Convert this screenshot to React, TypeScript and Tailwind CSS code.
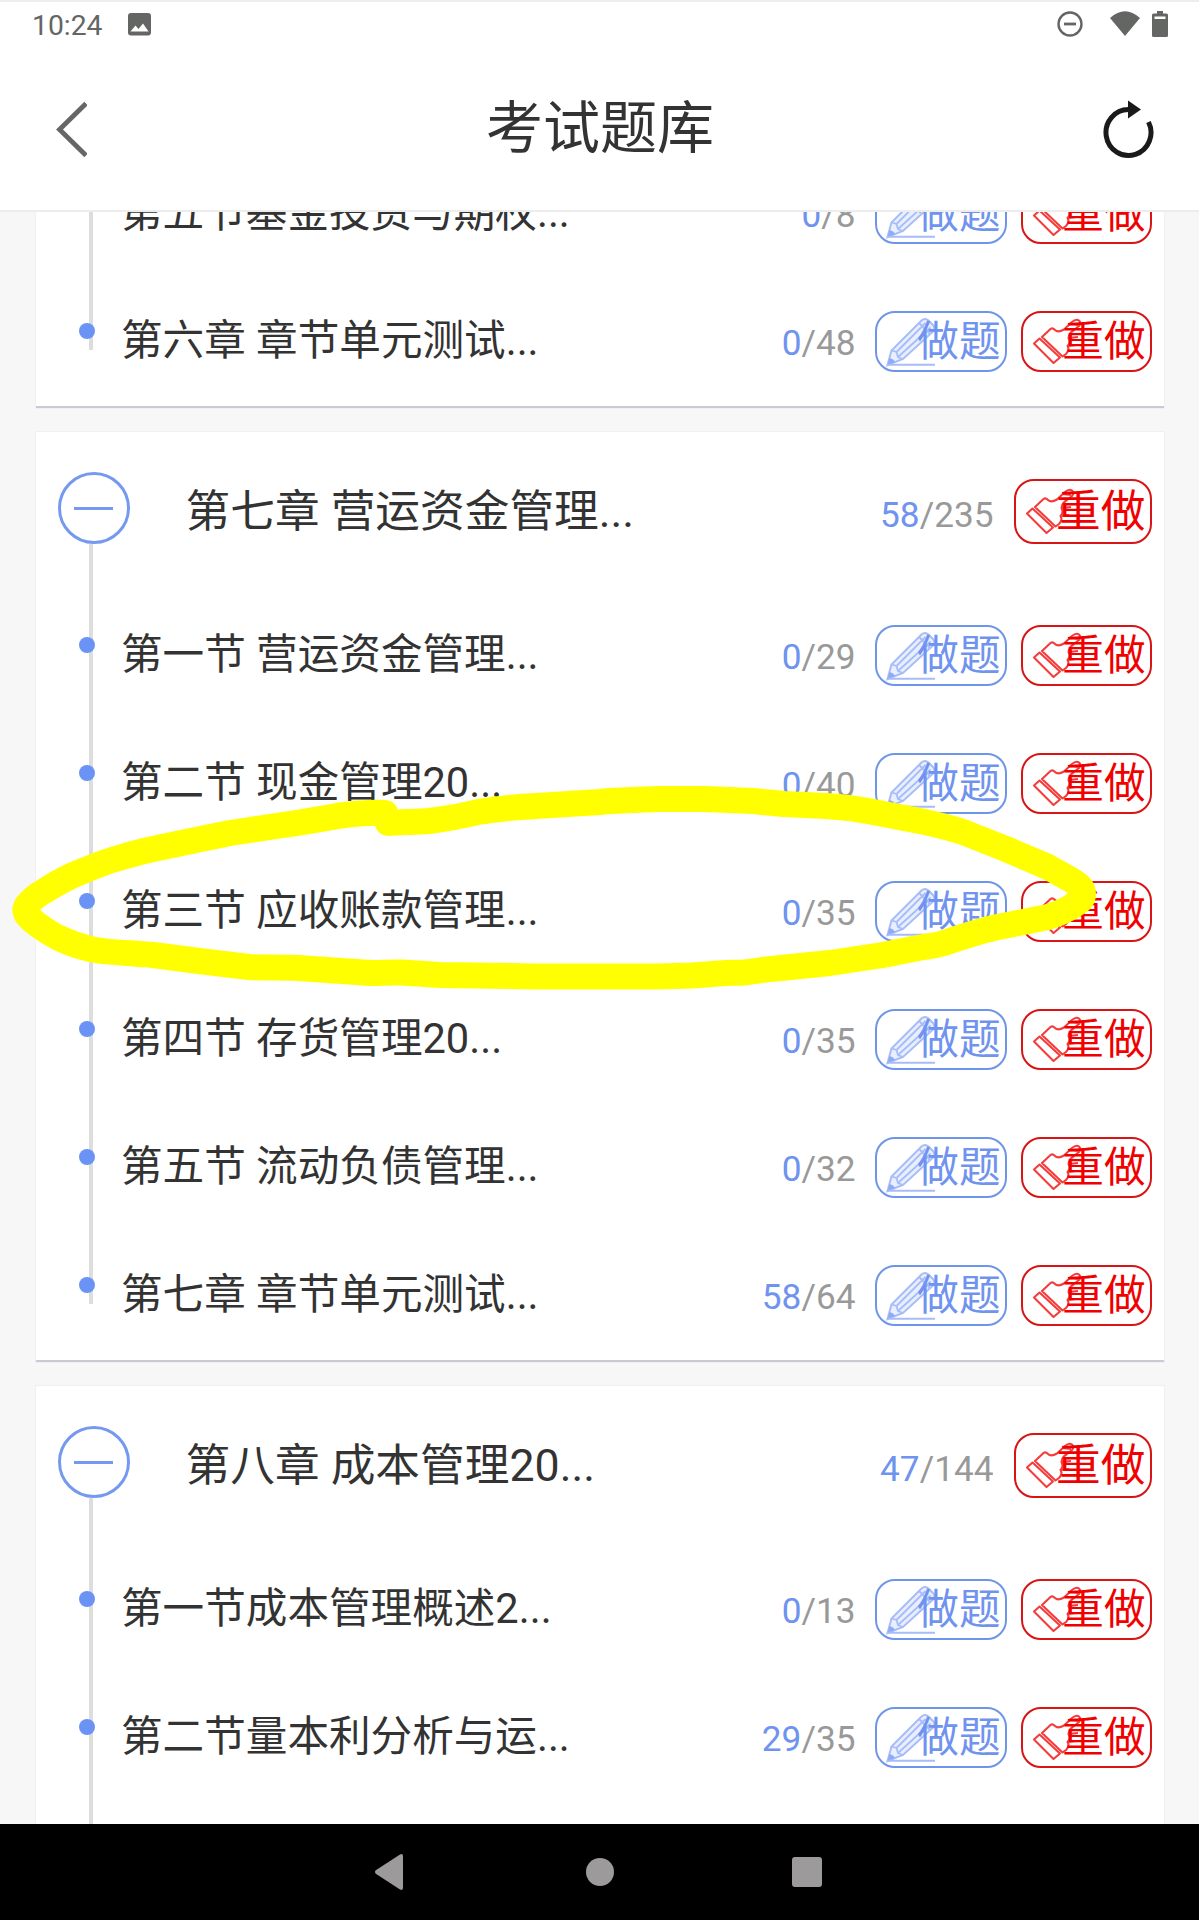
import clsx from 'clsx';

type Section = { title: string; done: number; total: number };

type Chapter = {
  title?: string;
  done?: number;
  total?: number;
  sections: Section[];
  open?: boolean;
};

const chapters: Chapter[] = [
  {
    sections: [
      { title: '第五节基金投资与期权...', done: 0, total: 8 },
      { title: '第六章 章节单元测试...', done: 0, total: 48 },
    ],
  },
  {
    title: '第七章 营运资金管理...',
    done: 58,
    total: 235,
    sections: [
      { title: '第一节 营运资金管理...', done: 0, total: 29 },
      { title: '第二节 现金管理20...', done: 0, total: 40 },
      { title: '第三节 应收账款管理...', done: 0, total: 35 },
      { title: '第四节 存货管理20...', done: 0, total: 35 },
      { title: '第五节 流动负债管理...', done: 0, total: 32 },
      { title: '第七章 章节单元测试...', done: 58, total: 64 },
    ],
  },
  {
    title: '第八章 成本管理20...',
    done: 47,
    total: 144,
    open: true,
    sections: [
      { title: '第一节成本管理概述2...', done: 0, total: 13 },
      { title: '第二节量本利分析与运...', done: 29, total: 35 },
    ],
  },
];

function PencilIcon() {
  return (
    <svg className="absolute left-[9px] top-[4px] h-[50px] w-[50px]" viewBox="0 0 50 50" fill="none">
      <path d="M1.5 48 5.5 33.5 35.5 3.5Q39 .5 42.5 3.5L47 8Q50 11 47 14.5L17 42Z" fill="#e9effe" stroke="#a6bdfa" strokeWidth="2" />
      <path d="M5.5 33.5 10.5 35 12 40 17 42M10.5 35 39.5 6M12 40 44.5 10.5M33 6 44 17" stroke="#a6bdfa" strokeWidth="1.8" />
      <path d="M1.5 48 3.5 41Q8 42 9 45Z" fill="#8eabf7" />
      <path d="M1 47.7H49" stroke="#a6bdfa" strokeWidth="2" />
    </svg>
  );
}

function ThumbIcon({ className }: { className: string }) {
  return (
    <svg className={clsx('absolute h-[50px] w-[50px]', className)} viewBox="0 0 50 50" fill="none" stroke="#f43c3c" strokeWidth="2.1" strokeLinejoin="round">
      <path d="M2 26.5 7.5 21.5 28 40.5 21.5 46Z" />
      <path d="M10 20 18.5 12Q20.5 10.5 23 13 26 16 32 12.5L40 5Q44 1.5 47 3.5 49.5 6 47 9L42 13Q37 16 36.5 21 39 26 35.5 29 38 33 34 37L30.5 39.5Z" />
      <path d="M38 7 46 8M36.5 21 46 20M35.5 29 44 28" />
    </svg>
  );
}

function DoButton() {
  return (
    <button className="relative mr-[14px] h-[61px] w-[132px] rounded-[20px] border-2 border-[#6f95ea] pr-[4px] text-right leading-[52px] text-[#6f93ee]">
      <PencilIcon />
      <span className="relative">做题</span>
    </button>
  );
}

function RedoButton({ large }: { large?: boolean }) {
  return (
    <button
      className={clsx(
        'relative rounded-[20px] border-2 border-[#d81414] pr-[4px] text-right text-[#f00000]',
        large ? 'h-[65px] w-[138px] leading-[58px]' : 'h-[61px] w-[131px] leading-[52px]',
      )}
    >
      <ThumbIcon className={large ? 'left-[9px] top-[6px]' : 'left-[9px] top-[4px]'} />
      <span className="relative">重做</span>
    </button>
  );
}

function Count({ done, total, className }: { done: number; total: number; className: string }) {
  return (
    <span className={clsx('text-[35.2px] text-[#999]', className)}>
      <span className="text-[#6f93ee]">{done}</span>/{total}
    </span>
  );
}

function SectionRow({ section, last }: { section: Section; last: boolean }) {
  return (
    <div className="relative flex h-32 items-start pr-3 pt-[33px] text-[41.6px] text-[#333]">
      <div className={clsx('absolute left-[53px] top-0 w-1 bg-[#ddd]', last ? 'h-[72px]' : 'h-full')} />
      <div className="relative ml-[43px] mt-3 size-4 rounded-full bg-[#6b93f6]" />
      <span className="ml-[26.5px] flex-1 leading-[59px]">{section.title}</span>
      <Count done={section.done} total={section.total} className="mr-[19px] leading-[64px]" />
      <DoButton />
      <RedoButton />
    </div>
  );
}

function ChapterHead({ chapter }: { chapter: Chapter }) {
  return (
    <div className="relative flex h-40 items-start pr-3 text-[44.7px] text-[#333]">
      <div className="absolute bottom-0 left-[53px] h-12 w-1 bg-[#ddd]" />
      <div className="ml-[22px] mt-10 flex size-[72px] items-center justify-center rounded-full border-[3px] border-[#7499ef]">
        <div className="h-[3px] w-[39px] bg-[#7499ef]" />
      </div>
      <span className="ml-[56px] mt-[47px] flex-1 leading-[66px]">{chapter.title}</span>
      <Count done={chapter.done!} total={chapter.total!} className="mr-5 mt-[47px] leading-[72px]" />
      <div className="mt-[47px] flex">
        <RedoButton large />
      </div>
    </div>
  );
}

function ChapterCard({ chapter }: { chapter: Chapter }) {
  const { sections, open } = chapter;
  return (
    <section className="mx-auto w-[1128px] border-b-2 border-[#cacad2] bg-white shadow-[0_0_0_1px_#f1f0f5]">
      {chapter.title && <ChapterHead chapter={chapter} />}
      {sections.map((s, i) => (
        <SectionRow key={s.title} section={s} last={!open && i === sections.length - 1} />
      ))}
      {open && (
        <div className="relative h-32">
          <div className="absolute left-[53px] top-0 h-full w-1 bg-[#ddd]" />
        </div>
      )}
    </section>
  );
}

function StatusBar() {
  return (
    <div className="flex h-[40px] items-start border-t-2 border-[#eee] pl-8 pr-[31px] text-[#646664]">
      <span className="mt-[5px] text-[28.3px] leading-[38px]">10:24</span>
      <svg className="ml-[26px] mt-[11px] h-[23px] w-[23px]" viewBox="0 0 23 23">
        <rect width="23" height="22.5" rx="3" fill="currentColor" />
        <path d="M2.5 18.5 7.5 12.5 10.5 16 15 10.5 20.5 18.5Z" fill="#fff" />
      </svg>
      <div className="flex-1" />
      <svg className="mt-[9px] h-[26px] w-[26px]" viewBox="0 0 26 26" fill="none" stroke="currentColor" strokeWidth="2.4">
        <circle cx="13" cy="13" r="11.5" />
        <path d="M7 13H19" strokeWidth="2.8" />
      </svg>
      <svg className="ml-[27px] mt-[9px] h-[25px] w-[30px]" viewBox="0 0 30 25" fill="currentColor">
        <path d="M0 7Q15-6.5 30 7L15 25Z" />
      </svg>
      <svg className="ml-[12px] mt-[9px] h-[26px] w-[16px]" viewBox="0 0 16 26" fill="currentColor">
        <path d="M5 0H11V2.5H14.5Q16 2.5 16 4V24.5Q16 26 14.5 26H1.5Q0 26 0 24.5V4Q0 2.5 1.5 2.5H5Z" />
        <path d="M2.5 5.5H13.5V8H2.5Z" fill="#fff" />
      </svg>
    </div>
  );
}

function Header() {
  return (
    <header className="flex h-[172px] items-center justify-between border-b-2 border-[#ededed] pl-[55px] pr-[43px] pt-[7px] text-[#333]">
      <svg className="h-[56px] w-[32px]" viewBox="0 0 32 56" fill="none" stroke="#666" strokeWidth="4.8">
        <path d="M31 2.5 4.500 28.500 31 54.5" />
      </svg>
      <h1 className="ml-[11px] text-[57px] leading-[80px]">考试题库</h1>
      <svg className="h-[60px] w-[54px]" viewBox="0 0 54 60" fill="none" stroke="#1a1a1a" strokeWidth="5">
        <path d="M26.5 10.500A22.500 23 0 1 0 46.500 23" />
        <path d="M26 1.500V19.500L39 10.500Z" fill="#1a1a1a" stroke="none" />
      </svg>
    </header>
  );
}

function NavBar() {
  return (
    <nav className="flex h-24 items-center justify-center bg-black pr-[2px] text-[#9d9a9c]">
      <svg className="h-9 w-[28px]" viewBox="0 0 28 32" fill="currentColor" preserveAspectRatio="none">
        <path d="M.8 14.5 25 .5Q28-.8 28 2V30Q28 32.8 25 31.5L.8 17.5Q-.8 16 .8 14.5Z" />
      </svg>
      <div className="ml-[183px] size-7 rounded-full bg-[#9d9a9c]" />
      <div className="ml-[178px] size-[30px] rounded-[3px] bg-[#9d9a9c]" />
    </nav>
  );
}

// Highlighter loop around 第三节, drawn on top of the list
function MarkerLoop() {
  return (
    <svg className="pointer-events-none absolute left-0 top-0 h-[1920px] w-[1199px]" viewBox="0 0 1199 1920" fill="none">
      <path
        d="M385 813C368 812 352 814 337 816 318 820 302 822 283 825L230 833 191 841 153 849C138 852 130 855 119 858 107 861 95 866 83 871 70 876 57 883 46 890 39 894 33 898 29 903 25 907 25 910 26 913 27 916 30 918 33 921 41 928 48 932 57 937 69 943 80 947 95 950 115 953 134 953 153 955L199 961 249 967C266 968 282 967 298 968L371 973C381 973 392 972 402 972.5L440 975 536 976.5H657L692 975.5 726 973 745 972.5C757 971 766 969 776 968.5L830 963 883 955 918 948C927 946 935 946 944 943 962 937 979 931 998 927L1048 917C1057 914 1067 910 1074 905 1080 901 1083 899 1083 894 1083 888 1079 885 1073 881L1048 867 1006 849 963 832C951 828 937 825 925 822L868 811C853 808 840 807 826 806L784 804 753 801 705 799H657C638 800 620 800 600 802L536 806C515 807 496 809 478 812 462 816 445 819 429 821 416 822 402 822 388 823"
        stroke="#ff0"
        strokeWidth="26"
        strokeLinecap="round"
        strokeLinejoin="round"
      />
    </svg>
  );
}

export default function App() {
  return (
    <div className="relative flex h-[1920px] w-[1199px] flex-col overflow-hidden bg-white font-[Roboto,'Noto_Sans_CJK_SC',sans-serif]">
      <StatusBar />
      <Header />
      <main className="h-[1612px] overflow-hidden bg-[#f7f7f7]">
        <div className="-mt-[62px] flex flex-col gap-6">
          {chapters.map((c, i) => (
            <ChapterCard key={i} chapter={c} />
          ))}
        </div>
      </main>
      <NavBar />
      <MarkerLoop />
    </div>
  );
}
